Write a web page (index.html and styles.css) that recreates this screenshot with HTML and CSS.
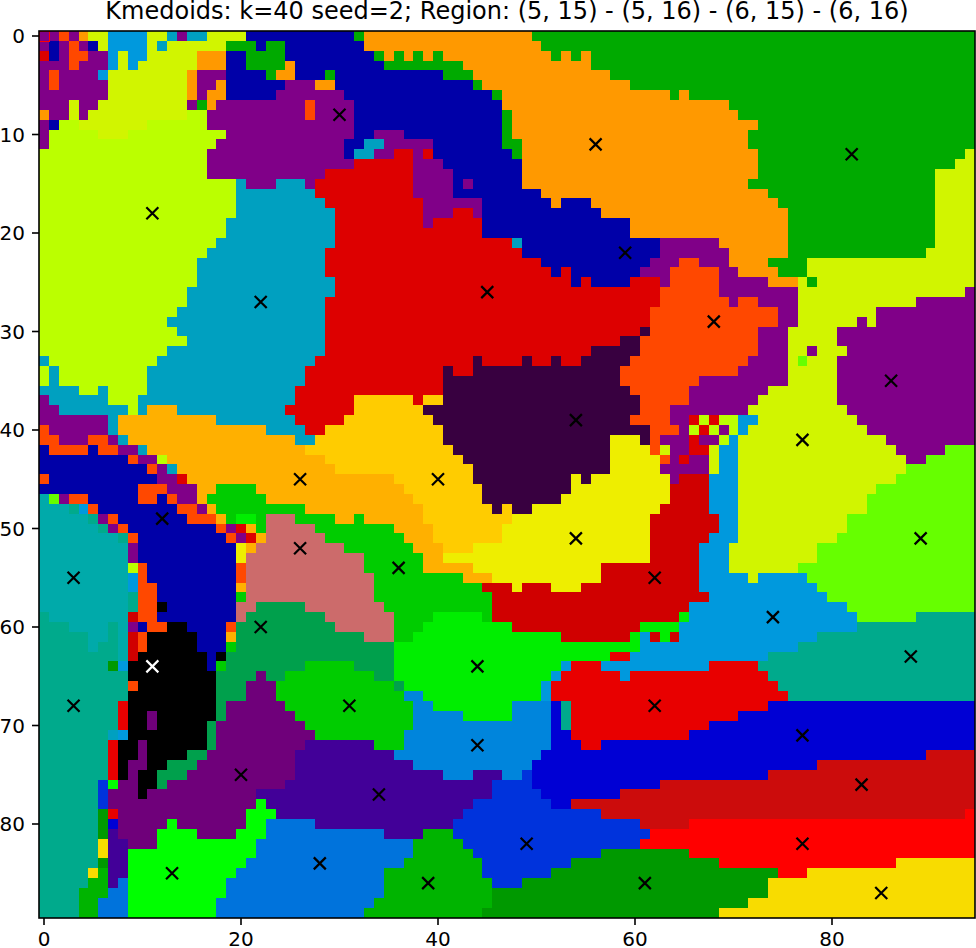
FILE: index.html
```html
<!DOCTYPE html>
<html lang="en">
<head>
<meta charset="utf-8">
<title>Kmedoids plot</title>
<link rel="stylesheet" href="styles.css">
</head>
<body>
<svg class="figure" width="976" height="948" viewBox="0 0 976 948" xmlns="http://www.w3.org/2000/svg">
  <text class="title" x="507" y="19">Kmedoids: k=40 seed=2; Region: (5, 15) - (5, 16) - (6, 15) - (6, 16)</text>
  <g id="cells" class="cells"></g>
  <rect class="pixel-outline" x="39.5" y="31.5" width="10" height="10"></rect>
  <g class="ticks">
    <line x1="44" y1="918" x2="44" y2="925"></line>
    <line x1="241" y1="918" x2="241" y2="925"></line>
    <line x1="438" y1="918" x2="438" y2="925"></line>
    <line x1="635" y1="918" x2="635" y2="925"></line>
    <line x1="832" y1="918" x2="832" y2="925"></line>
    <line x1="32" y1="36" x2="39" y2="36"></line>
    <line x1="32" y1="134.5" x2="39" y2="134.5"></line>
    <line x1="32" y1="233" x2="39" y2="233"></line>
    <line x1="32" y1="331.5" x2="39" y2="331.5"></line>
    <line x1="32" y1="430" x2="39" y2="430"></line>
    <line x1="32" y1="528.5" x2="39" y2="528.5"></line>
    <line x1="32" y1="627" x2="39" y2="627"></line>
    <line x1="32" y1="725.5" x2="39" y2="725.5"></line>
    <line x1="32" y1="824" x2="39" y2="824"></line>
  </g>
  <g class="xlabels">
    <text x="44" y="946">0</text>
    <text x="241" y="946">20</text>
    <text x="438" y="946">40</text>
    <text x="635" y="946">60</text>
    <text x="832" y="946">80</text>
  </g>
  <g class="ylabels">
    <text x="25" y="43">0</text>
    <text x="25" y="142">10</text>
    <text x="25" y="240">20</text>
    <text x="25" y="339">30</text>
    <text x="25" y="437">40</text>
    <text x="25" y="536">50</text>
    <text x="25" y="634">60</text>
    <text x="25" y="733">70</text>
    <text x="25" y="831">80</text>
  </g>
  <rect class="spine" x="39" y="31" width="936" height="887"></rect>
  <g id="markers" class="markers"></g>
</svg>
<script src="chart.js"></script>
</body>
</html>
```
FILE: styles.css
```css
html, body {
  margin: 0;
  padding: 0;
  background: #fff;
}
.figure {
  display: block;
  font-family: "DejaVu Sans", sans-serif;
}
.title {
  font-size: 24px;
  text-anchor: middle;
  fill: #000;
}
.xlabels text, .ylabels text {
  font-size: 20px;
  fill: #000;
}
.xlabels text { text-anchor: middle; }
.ylabels text { text-anchor: end; }
.ticks line {
  stroke: #000;
  stroke-width: 1.6;
}
.spine {
  fill: none;
  stroke: #000;
  stroke-width: 1.6;
}
.pixel-outline {
  fill: none;
  stroke: #ff0000;
  stroke-width: 1;
}
.cells rect { shape-rendering: crispEdges; }
.marker-line {
  stroke: #000;
  stroke-width: 2.2;
  fill: none;
}
.marker-line.light { stroke: #fff; }

.cell-P { fill: #800088; }
.cell-D { fill: #0000a8; }
.cell-O { fill: #ff9900; }
.cell-G { fill: #00aa00; }
.cell-Y { fill: #d1f500; }
.cell-L { fill: #bbff00; }
.cell-C { fill: #00a0c0; }
.cell-S { fill: #0099dd; }
.cell-R { fill: #dd0000; }
.cell-H { fill: #d00000; }
.cell-I { fill: #e80000; }
.cell-F { fill: #ff4800; }
.cell-K { fill: #380040; }
.cell-A { fill: #ffb000; }
.cell-W { fill: #ffcc00; }
.cell-E { fill: #eeee00; }
.cell-M { fill: #cc6b6b; }
.cell-N { fill: #00cc00; }
.cell-B { fill: #00ee00; }
.cell-Q { fill: #00a04c; }
.cell-T { fill: #00aaaa; }
.cell-U { fill: #00aa8c; }
.cell-J { fill: #0000d4; }
.cell-V { fill: #0033dc; }
.cell-Z { fill: #0085dc; }
.cell-X { fill: #0073dc; }
.cell-a { fill: #420098; }
.cell-b { fill: #6f007a; }
.cell-c { fill: #cc0c0c; }
.cell-d { fill: #ff0000; }
.cell-e { fill: #f8dc00; }
.cell-f { fill: #009900; }
.cell-g { fill: #00b400; }
.cell-h { fill: #00ff00; }
.cell-i { fill: #66ff00; }
.cell-k { fill: #000000; }
```
FILE: chart.js
```js
(function () {
  var NS = "http://www.w3.org/2000/svg";
  var COLS = 95, X0 = 39.1, Y0 = 31, STEP = 9.85;
  var rows = [
    "P0 F2 P3 O4 Y5 S7 Y11 C13 P14 C15 Y17 D21 G32 O33 G50",
    "P0 D1 P2 F3 P4 D5 Y6 S7 Y11 C12 Y13 G19 D22 G23 D25 O33 G51",
    "R0 D1 P2 F3 P5 S7 Y8 S9 Y11 O16 D19 G21 D25 G34 O35 G36 O37 G38 O39 G40 O41 G52 O53 G54 O55 G56",
    "P0 F3 P4 S7 Y8 S9 Y10 O16 D19 G21 O25 D26 G35 O43 G56",
    "P0 F1 P2 S6 Y7 O15 P16 D19 G23 O24 D26 G29 D30 G41 O44 G58",
    "P0 F1 P2 Y7 O15 P16 O18 D19 P25 O28 D30 G44 O45 G60",
    "P0 Y7 O15 P16 O17 D19 P24 D31 G46 O47 G64 O65 G66",
    "P0 Y3 P4 Y6 P15 G16 O17 P18 F27 P28 D32 O47 G70",
    "O0 P1 Y3 P4 Y5 L15 P17 F27 P28 D32 G47 O48 G71",
    "P0 D1 L2 Y4 L11 P17 D32 G47 O48 G73",
    "P0 L1 Y6 L9 P19 D32 P34 D37 G47 O48 G72",
    "P0 L1 P18 D31 C33 P35 D40 G47 O49 G72",
    "L0 P17 D31 C32 P34 R36 P38 R39 D40 G48 O49 G73 Y94",
    "L0 P17 R32 P38 D41 O49 G73 Y93",
    "L0 P17 R29 P38 D42 O49 G73 Y91",
    "L0 C20 P21 C24 P27 R28 P38 D42 P43 D44 O49 G72 Y91",
    "L0 C20 R28 P38 D42 O51 G74 Y91",
    "L0 C20 R29 P39 D45 O52 D53 O56 G75 Y91",
    "L0 C20 R30 P39 R42 P44 D45 O57 G76 Y91",
    "L0 C19 R30 P39 R40 D45 O60 G76 Y91",
    "L0 C19 R30 D45 O60 G76 Y91",
    "L0 C18 R30 C48 D49 P63 O69 G76 Y91",
    "L0 C17 R29 D49 P63 O70 G76 Y90",
    "L0 C16 R29 D51 P62 F65 P67 O70 G74 Y78",
    "L0 C16 R29 D52 R53 D54 P61 F64 P69 O71 G75 Y78",
    "L0 C16 R30 D54 R55 D56 R60 P63 F64 P69 O74 Y77 G78 Y79",
    "L0 C15 R30 F63 P69 Y77 P94",
    "L0 C15 R29 F63 P70 F71 P73 Y77 P89",
    "L0 C14 R29 F62 P75 Y77 P85",
    "L0 C13 R29 F62 P75 Y77 P83 Y84 P85",
    "L0 C14 R29 K61 F62 P73 Y76 P81",
    "L0 C15 R29 K59 F61 P73 Y76 P81",
    "L0 C13 R29 K56 F61 P73 Y76 P78 Y79 P82",
    "C0 L1 C12 R28 K44 R45 K49 R50 K52 R53 K55 F60 P72 Y76 i77 Y78 P81",
    "L0 C1 L2 C11 R27 K41 R42 K44 F59 P71 Y76 P81",
    "L0 C1 L2 C11 R27 K41 F59 P67 Y76 P81",
    "C0 L4 C6 L7 C11 R26 K41 F60 P66 Y74 P81",
    "P0 C1 L7 C10 R26 W32 R38 W39 K41 F61 P66 Y73 P81",
    "P0 C2 L9 C10 A11 C14 R25 W32 K39 F61 P64 Y72 P82",
    "P0 C7 A8 C18 R26 W31 K40 F60 P64 R66 L67 R68 L69 S71 Y73 P83",
    "F0 P1 C7 A8 C23 R27 W29 K41 F62 P65 L66 R67 L68 P69 L70 S71 Y72 P84",
    "F0 P2 F5 P7 C8 A9 C26 W28 K41 E58 K61 F62 P63 R66 P67 L69 S70 Y71 P86",
    "D0 F1 D5 F6 P8 C10 A11 W27 K42 E58 F62 Y63 P64 R66 Y68 S69 Y71 P87 i92",
    "D0 F9 P10 L12 A13 W29 K43 E58 F63 P64 R65 P66 Y68 S69 Y71 P88 i90",
    "D0 F11 P12 C13 A14 W30 K44 E58 P63 Y68 S69 Y71 i88",
    "F0 D1 P12 R14 A15 W36 K44 E54 K55 E56 P64 H65 S68 Y71 i87",
    "D0 F10 P13 A16 N18 A22 W37 K45 E54 H64 S68 Y71 i85",
    "T0 i1 P2 F3 D5 F10 D12 F13 P14 A16 N17 A23 W38 K45 E53 H64 S68 Y71 i84",
    "T0 U3 S4 F5 D6 F14 P16 A17 N18 A27 W39 K46 W47 K48 E50 H63 S68 Y71 i84",
    "T0 U5 P6 F7 D8 F15 A18 N19 B20 N22 M23 N26 A30 N32 A33 W39 E48 H62 S69 Y71 i82",
    "T0 U6 P7 F8 D9 F18 P19 R20 A21 N22 M23 N28 A36 W40 E47 H62 S69 Y71 i82",
    "T0 U8 F9 D10 F19 P20 R21 A22 M23 N29 A37 W40 E47 H62 S68 Y71 i81",
    "T0 P9 D10 E20 A21 M22 N31 A38 W41 E44 H62 S67 Y70 i79",
    "T0 P9 D10 E20 M21 N33 A39 E41 H62 S67 Y70 i79",
    "T0 L9 F10 D11 F20 M21 N33 A39 E44 H57 S67 Y70 i77",
    "T0 S9 F10 D11 F20 M21 N34 A43 E46 H57 S67 Y72 S73 i78",
    "T0 S9 F10 D12 A20 M21 N34 H45 E48 H49 E52 H55 S67 i79",
    "T0 U9 F10 D12 N20 M21 N34 H46 S68 i80",
    "T0 U9 F10 k12 D13 M20 Q22 M27 N35 H46 S66 i82",
    "U0 T1 H9 F10 D12 M20 Q21 M29 N36 B40 N45 H46 B65 S66 i83 U89",
    "U0 T3 U7 T8 P9 D10 F11 k13 D15 F19 Q20 M30 N36 B39 H48 B61 S65 U83",
    "U0 T5 U7 T8 H9 F10 k11 D16 A19 Q20 M33 N36 B38 H53 B60 S61 H62 B63 H64 S65 U79",
    "U0 T5 U6 T8 H9 F10 k11 D16 N19 Q20 B36 S61 U77",
    "U0 T8 H9 k10 D17 k18 Q19 B36 I58 S60 U74",
    "U0 f7 S8 k9 D17 N18 Q19 N27 Q32 B36 S53 I54 S57 I68 U73",
    "U0 k9 Q18 b22 Q23 N25 Q34 B36 S52 I53 S59 I60 U74",
    "U0 F9 k10 Q18 b21 N24 Q36 B37 S51 I52 U75",
    "U0 k9 Q18 b21 N24 Z37 B39 S51 I52 U76",
    "U0 I8 k9 Q18 b19 N25 Z38 B40 Z48 J52 U53 I54 J74",
    "U0 I8 k9 b11 k12 Q18 b19 N26 Z38 B43 Z48 J52 U53 I54 J71",
    "U0 I8 k9 b11 k12 Q17 b18 N27 Z38 J52 U53 I54 J68",
    "U0 C7 S8 k9 Q17 b18 N28 Z37 J52 I54 J66",
    "U0 I7 k8 b10 k11 Q17 b18 a27 N34 Z37 J52 I55 J57",
    "U0 I7 k8 b10 k11 Q15 b17 a26 Z36 J51 c90",
    "U0 I7 k8 b9 k11 Q13 b16 a26 Z38 J50 c79",
    "U0 I7 k8 b9 k10 Q12 b15 a26 Z41 a44 Z47 V49 J50 c74",
    "U0 V6 h7 b8 k10 Q12 b13 a25 V46 J50 c63",
    "U0 V6 b7 k10 b11 a22 V46 J51 c59",
    "U0 V6 b7 h22 a23 V44 J52 c54",
    "U0 f6 I7 b8 h21 a24 V43 c57 d94",
    "U0 f6 J7 b8 h13 b14 h21 X23 a28 V42 c61 d66",
    "U0 f6 a7 b8 h12 b16 h20 X23 a35 g39 V42 d62",
    "U0 e6 a7 b9 h12 X22 g38 V43 d61",
    "U0 e6 a7 h9 X22 g38 V44 f57 d66",
    "U0 f6 a7 h9 X21 g37 V45 f54 d69 e87",
    "U0 e5 g6 a7 h9 X20 g35 V45 f52 d75 e78",
    "U0 g5 a7 X8 h9 X19 g35 V46 f49 e74",
    "U0 g4 X7 h9 X19 g35 f46 e74",
    "U0 g4 X6 h9 X18 g34 f46 e72",
    "U0 g4 X6 h9 X18 g33 f45 e69"
  ];
  var medoids = [
    [30,8],[56,11],[82,12],[11,18],[59,22],[22,27],[45,26],[68,29],[86,35],[54,39],
    [77,41],[26,45],[40,45],[12,49],[89,51],[54,51],[26,52],[62,55],[36,54],[3,55],
    [74,59],[22,60],[88,63],[44,64],[3,68],[31,68],[62,68],[77,71],[44,72],[20,75],
    [34,77],[83,76],[49,82],[77,82],[28,84],[13,85],[39,86],[61,86],[85,87]
  ];
  var edgeX = function (c) { return Math.round(X0 + STEP * c); };
  var edgeY = function (r) { return Math.round(Y0 + STEP * r); };

  var cells = document.getElementById("cells");
  rows.forEach(function (line, r) {
    var runs = line.split(" ");
    runs.forEach(function (run, i) {
      var start = parseInt(run.slice(1), 10);
      var end = i + 1 < runs.length ? parseInt(runs[i + 1].slice(1), 10) : COLS;
      var rect = document.createElementNS(NS, "rect");
      rect.setAttribute("class", "cell-" + run.charAt(0));
      rect.setAttribute("x", edgeX(start));
      rect.setAttribute("y", edgeY(r));
      rect.setAttribute("width", edgeX(end) - edgeX(start));
      rect.setAttribute("height", edgeY(r + 1) - edgeY(r));
      cells.appendChild(rect);
    });
  });

  var markers = document.getElementById("markers");
  function drawMarker(col, row, cls) {
    var cx = 44 + STEP * col, cy = 36 + STEP * row, h = 6;
    var path = document.createElementNS(NS, "path");
    path.setAttribute("class", cls);
    path.setAttribute("d",
      "M" + (cx - h) + " " + (cy - h) + "L" + (cx + h) + " " + (cy + h) +
      "M" + (cx - h) + " " + (cy + h) + "L" + (cx + h) + " " + (cy - h));
    markers.appendChild(path);
  }
  medoids.forEach(function (m) { drawMarker(m[0], m[1], "marker-line"); });
  drawMarker(11, 64, "marker-line light");
})();
```
